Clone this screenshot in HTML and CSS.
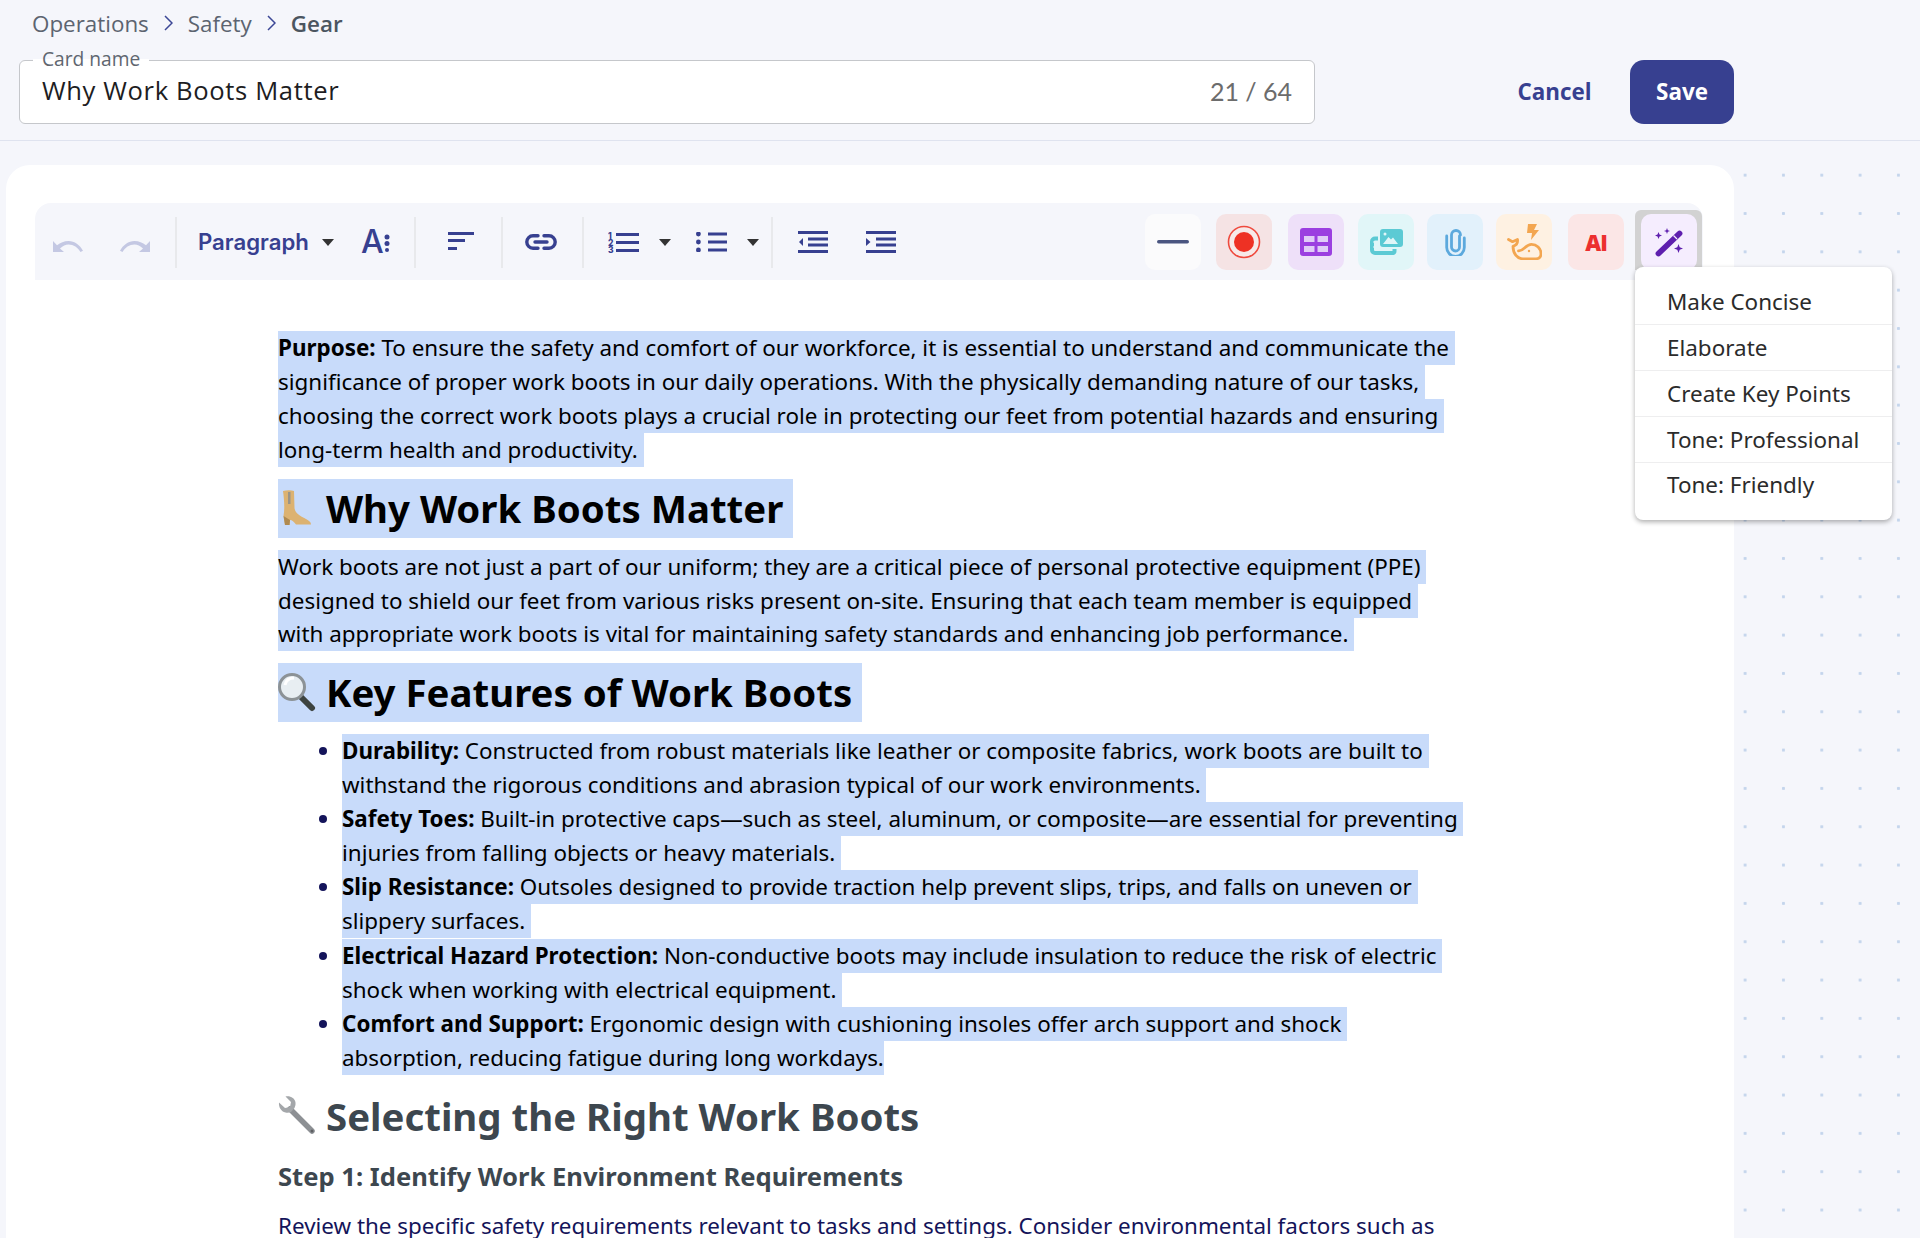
FILE: index.html
```html
<!DOCTYPE html>
<html lang="en">
<head>
<meta charset="utf-8">
<title>Why Work Boots Matter</title>
<link rel="stylesheet" href="styles.css">
</head>
<body>
<header class="topbar">
  <nav class="crumbs">
    <span>Operations</span>
    <svg class="chev" width="9" height="16" viewBox="0 0 9 16"><path d="M1 1l7 7-7 7"/></svg>
    <span>Safety</span>
    <svg class="chev" width="9" height="16" viewBox="0 0 9 16"><path d="M1 1l7 7-7 7"/></svg>
    <span class="crumb-current">Gear</span>
  </nav>
  <div class="name-row">
    <div class="name-field">
      <span class="name-label">Card name</span>
      <span class="name-value">Why Work Boots Matter</span>
      <span class="name-count">21 / 64</span>
    </div>
    <button class="btn-cancel">Cancel</button>
    <button class="btn-save">Save</button>
  </div>
</header>
<main class="canvas">
  <section class="card">
    <div class="toolbar">
      <span class="tool t-undo"><svg width="30" height="11" viewBox="0 0 30 11"><path class="fade" d="M0 0v11h11L7 7.400C10 4.800 12.500 3.500 15.500 3.500c5 0 9.500 3 12 7.500L30 9.800C27 4 21.500 0 15.500 0 11 0 7.500 1.700 4 4.300z"/></svg></span>
      <span class="tool t-redo"><svg width="30" height="11" viewBox="0 0 30 11"><path class="fade" transform="matrix(-1 0 0 1 30 0)" d="M0 0v11h11L7 7.400C10 4.800 12.500 3.500 15.500 3.500c5 0 9.500 3 12 7.500L30 9.800C27 4 21.500 0 15.500 0 11 0 7.500 1.700 4 4.300z"/></svg></span>
      <i class="sep s1"></i>
      <span class="para">Paragraph</span>
      <svg class="caret c1" width="12" height="7" viewBox="0 0 12 7"><path d="M0 0h12L6 7z"/></svg>
      <span class="fontsize"><span>A</span><svg width="6" height="18" viewBox="0 0 6 18"><circle cx="3" cy="3" r="2.500"/><circle cx="3" cy="9.500" r="2.500"/><circle cx="3" cy="16" r="2"/></svg></span>
      <i class="sep s2"></i>
      <svg class="ic i-align" width="26" height="18" viewBox="0 0 26 18"><path d="M0 0h26v3H0zM0 7h17v3H0zM0 15h9v3H0z"/></svg>
      <i class="sep s3"></i>
      <svg class="i-link" width="32" height="16" viewBox="0 0 32 16"><path d="M13 1.800H8a6.200 6.200 0 0 0 0 12.400h5M19 1.800h5a6.200 6.200 0 0 1 0 12.400h-5M10 8h12"/></svg>
      <i class="sep s4"></i>
      <svg class="ic i-ol" width="31" height="22" viewBox="0 0 31 22"><text x="0" y="7.500" class="num">1</text><text x="0" y="14.500" class="num">2</text><text x="0" y="22" class="num">3</text><path d="M8 2h23v3H8zM8 10h23v3H8zM8 18h23v3H8z"/></svg>
      <svg class="caret c2" width="12" height="7" viewBox="0 0 12 7"><path d="M0 0h12L6 7z"/></svg>
      <svg class="ic i-ul" width="31" height="20" viewBox="0 0 31 20"><circle cx="2.400" cy="2" r="2.400"/><circle cx="2.400" cy="10" r="2.400"/><circle cx="2.400" cy="18" r="2.400"/><path d="M12 .500h19v3H12zM12 8.500h19v3H12zM12 16.500h19v3H12z"/></svg>
      <svg class="caret c3" width="12" height="7" viewBox="0 0 12 7"><path d="M0 0h12L6 7z"/></svg>
      <i class="sep s5"></i>
      <svg class="ic i-out" width="30" height="22" viewBox="0 0 30 22"><path d="M0 0h30v3H0zM10 6.500h20v3H10zM10 12.500h20v3H10zM0 19h30v3H0zM5 7v8L1 11z"/></svg>
      <svg class="ic i-in" width="30" height="22" viewBox="0 0 30 22"><path d="M0 0h30v3H0zM10 6.500h20v3H10zM10 12.500h20v3H10zM0 19h30v3H0zM0 7v8l4.500-4z"/></svg>
      <div class="insert">
        <span class="pill p-line"><svg width="32" height="4" viewBox="0 0 32 4"><rect width="32" height="3.500" rx="1.700" fill="#4a5580"/></svg></span>
        <span class="pill p-rec"><svg width="34" height="34" viewBox="0 0 34 34"><circle cx="17" cy="17" r="15.500" fill="#f7e9e8" stroke="#ef4a3e" stroke-width="1.600"/><circle cx="17" cy="17" r="10" fill="#ee3124"/></svg></span>
        <span class="pill p-table"><svg width="32" height="28" viewBox="0 0 32 28"><rect width="32" height="28" rx="3" fill="#9b3fe0"/><path fill="#e0ccf7" d="M4 8h10.500v6H4zM17.500 8H28v6H17.500zM4 18h10.500v6H4zM17.500 18H28v6H17.500z"/></svg></span>
        <span class="pill p-img"><svg width="33" height="26" viewBox="0 0 33 26"><path fill="none" stroke="#5ccad4" stroke-width="4" d="M8 9.500H5a3 3 0 0 0-3 3V21a3 3 0 0 0 3 3h18a2 2 0 0 0 1.500-2v-2"/><path fill="#e1f6f8" d="M3.500 12h2.500v2H3.500zM3.500 17h2.500v2H3.500z"/><rect x="10" width="23" height="18" rx="3" fill="#5ccad4"/><path fill="#e1f6f8" d="M13 15l5.500-7 2.500 2.500 2-2 5 6.500z"/><circle cx="15" cy="5" r="1.500" fill="#e1f6f8"/></svg></span>
        <span class="pill p-clip"><svg width="21" height="27" viewBox="0 0 21 27"><path fill="none" stroke="#5ca9dd" stroke-width="2.800" stroke-linecap="round" d="M14.500 7v11a4 4 0 0 1-8 0V6a4.500 4.500 0 0 1 9 0M19.300 9v9.500a8.800 8.800 0 0 1-17.600 0V7"/></svg></span>
        <span class="pill p-whale"><svg width="35" height="36" viewBox="0 0 35 36"><path fill="#f3a650" d="M21 0h9l-3 6h5l-8 10 1-7h-5z"/><path fill="none" stroke="#f3a650" stroke-width="2.800" stroke-linejoin="round" stroke-linecap="round" d="M1.500 15.500l4 2.200 5-2.200c.5 4-1.500 6-4.500 6.800 0 7 4 12.500 10 12.500h13c3 0 5-2 5-5 0-5.500-4.500-9.500-9.500-9.500-6 0-7.500 7-13 6.500"/><circle cx="22" cy="27" r="1.200" fill="#f3a650"/></svg></span>
        <span class="pill p-ai">AI</span>
        <span class="wand-frame"><span class="pill p-wand"><svg width="29" height="29" viewBox="0 0 29 29"><path stroke="#5e1fae" stroke-width="5.800" stroke-linecap="round" d="M3.500 25.500L24.500 5.500"/><path stroke="#f5edfe" stroke-width="1.300" d="M18.500 7.500l3.500 3.500"/><path fill="#5e1fae" d="M3.500 4l1 2.500 2.500 1-2.500 1-1 2.500-1-2.500L0 7.500l2.500-1zM12 0l.8 2.200L15 3l-2.200.8L12 6l-.8-2.200L9 3l2.200-.8zM23.500 16l1.200 3.300 3.300 1.200-3.300 1.200-1.200 3.300-1.200-3.300-3.300-1.200 3.300-1.200z"/></svg></span></span>
      </div>
      <ul class="menu">
        <li>Make Concise</li>
        <li>Elaborate</li>
        <li>Create Key Points</li>
        <li>Tone: Professional</li>
        <li>Tone: Friendly</li>
      </ul>
    </div>
    <article class="doc" id="doc">
      <p id="first"><strong>Purpose:</strong> To ensure the safety and comfort of our workforce, it is essential to understand and communicate the significance of proper work boots in our daily operations. With the physically demanding nature of our tasks, choosing the correct work boots plays a crucial role in protecting our feet from potential hazards and ensuring long-term health and productivity.</p>
      <h2><svg class="emoji picked" width="38" height="59" viewBox="0 -9 38 59"><path fill="#dcb271" d="M5 3C9 2 13 2 16 3l.5 17c.5 5 5.500 8 11.500 11 3 1.500 5 3 5 5.500H18c-2-2.500-4-4.500-6-4.500l-.5 5H7L5.500 28C7 20 6 10 5 3z"/><path fill="#b08a50" d="M5.500 28l6.500 4-.5 5H7z"/><path fill="#9a9488" d="M10 4h2.500v12H10z"/></svg> Why Work Boots Matter</h2>
      <p class="tight">Work boots are not just a part of our uniform; they are a critical piece of personal protective equipment (PPE) designed to shield our feet from various risks present on-site. Ensuring that each team member is equipped with appropriate work boots is vital for maintaining safety standards and enhancing job performance.</p>
      <h2><svg class="emoji picked" width="38" height="59" viewBox="0 -9 38 59"><path stroke="#3d4340" stroke-width="6" stroke-linecap="round" d="M23 25l11 11"/><circle cx="14" cy="15" r="12.500" fill="#e8eef2" stroke="#8c9296" stroke-width="3"/><path d="M7 13c1-5 5-7 9-7" fill="none" stroke="#fff" stroke-width="3"/></svg> Key Features of Work Boots</h2>
      <ul>
        <li><strong>Durability:</strong> Constructed from robust materials like leather or composite fabrics, work boots are built to withstand the rigorous conditions and abrasion typical of our work environments.</li>
        <li><strong>Safety Toes:</strong> Built-in protective caps—such as steel, aluminum, or composite—are essential for preventing injuries from falling objects or heavy materials.</li>
        <li><strong>Slip Resistance:</strong> Outsoles designed to provide traction help prevent slips, trips, and falls on uneven or slippery surfaces.</li>
        <li><strong>Electrical Hazard Protection:</strong> Non-conductive boots may include insulation to reduce the risk of electric shock when working with electrical equipment.</li>
        <li><strong>Comfort and Support:</strong> Ergonomic design with cushioning insoles offer arch support and shock absorption, reducing fatigue during long workdays.</li>
      </ul>
      <h2><svg class="emoji" width="38" height="59" viewBox="0 -9 38 59"><path stroke="#8d9094" stroke-width="5.500" stroke-linecap="round" d="M12 13l22 22"/><path fill="#a4a7aa" d="M1 6.500L7 12l5-1 1-5-5.500-5.500C12 -.5 17 2 17.500 6.500c.3 2.500-.5 4-1 5.500L13 16c-1.500.7-3.500 1-5.500.5C3 15.500.5 11 1 6.500z"/><circle cx="34" cy="35" r="1.500" fill="#5d5f62"/></svg> Selecting the Right Work Boots</h2>
      <h3>Step 1: Identify Work Environment Requirements</h3>
      <p>Review the specific safety requirements relevant to tasks and settings. Consider environmental factors such as</p>
    </article>
  </section>
</main>
<script src="select.js"></script>
</body>
</html>
```
FILE: styles.css
```css
* { box-sizing: border-box; }
html, body { margin: 0; height: 1238px; overflow: hidden; }
body { background: #f5f6fb; font-family: "Noto Sans", sans-serif; display: flex; flex-direction: column; }

.topbar { height: 141px; border-bottom: 1px solid #dfe3ef; flex: none; }
.crumbs { height: 46px; padding-left: 32px; display: flex; align-items: center; gap: 15px; font: 400 22.4px "Open Sans", sans-serif; color: #5c6470; }
.crumb-current { font-weight: 600; color: #4b5560; }
.chev { fill: none; stroke: #3c4796; stroke-width: 1.500; }
.name-row { display: flex; align-items: center; padding-left: 19px; margin-top: 14px; }
.name-field { position: relative; width: 1296px; height: 64px; background: #fff; border: 1px solid #c5c7cb; border-radius: 6px; display: flex; align-items: center; justify-content: space-between; padding: 0 22px 3px; }
.name-label { position: absolute; left: 13px; top: -14px; padding: 0 9px; height: 24px; background: linear-gradient(#f5f6fb 50%, #fff 50%); font: 400 19.2px/24px "Open Sans", sans-serif; color: #5f6670; }
.name-value { font: 400 25.6px "Open Sans", sans-serif; letter-spacing: .63px; color: #1d1d22; }
.name-count { font: 400 25px "Lato", sans-serif; color: #6c6c6c; }
button { border: 0; background: none; font: 700 22.4px "Open Sans", sans-serif; padding: 0 0 2px; }
.btn-cancel { margin-left: 202px; color: #374090; width: 75px; }
.btn-save { margin-left: 38px; width: 104px; height: 64px; border-radius: 14px; background: #374090; color: #fff; }

.canvas { flex: 1; min-height: 0; overflow: hidden; padding: 24px 186px 0 6px; background-image: radial-gradient(circle at center, #c4d5ec 0, #c4d5ec 1.3px, transparent 1.8px); background-size: 38.33px 38.33px; background-position: 1.2px 15px; }
.card { height: 100%; background: #fff; border-radius: 24px 24px 0 0; padding: 38px 31px 0 29px; }

.toolbar { position: relative; height: 77px; background: #f5f6fb; border-radius: 16px 16px 0 0; display: flex; align-items: center; }
.toolbar svg { flex: none; display: block; }
.ic, .fontsize svg, .i-ol .num { fill: #374090; }
.fade { fill: #c4c8e3; }
.tool { display: flex; width: 30px; margin-top: 10px; }
.t-undo { margin-left: 18px; }
.t-redo { margin-left: 37px; }
.sep { flex: none; width: 2px; height: 51px; background: #e8e9ec; margin-top: 1px; }
.s1 { margin-left: 25px; }
.para { margin-left: 21px; width: 112px; font: 600 22.2px "Inter", sans-serif; color: #374090; white-space: nowrap; }
.caret { fill: #333; margin-top: 1px; }
.c1 { margin-left: 12px; }
.fontsize { margin-left: 27px; width: 27px; display: flex; align-items: center; justify-content: space-between; color: #374090; font: 500 32px/1 "Inter", sans-serif; }
.fontsize svg { margin-top: 3px; }
.s2 { margin-left: 26px; }
.i-align { margin: -2px 0 0 32px; }
.s3 { margin-left: 27px; }
.i-link { margin-left: 22px; fill: none; stroke: #374090; stroke-width: 3.400; stroke-linecap: round; }
.s4 { margin-left: 25px; }
.i-ol { margin-left: 24px; }
.i-ol .num { font: 800 8.500px "Inter", sans-serif; }
.c2 { margin-left: 20px; }
.i-ul { margin-left: 25px; }
.c3 { margin-left: 20px; }
.s5 { margin-left: 12px; }
.i-out { margin-left: 25px; }
.i-in { margin-left: 38px; }

.insert { margin-left: auto; margin-right: 1px; display: flex; align-items: flex-start; align-self: flex-start; padding-top: 11px; }
.pill { flex: none; width: 56px; height: 56px; border-radius: 10px; display: flex; align-items: center; justify-content: center; }
.p-line { background: #fbfbfc; }
.p-rec { background: #f5e3e4; margin-left: 15px; }
.p-table { background: #eee0f9; margin-left: 16px; }
.p-img { background: #e1f6f8; margin-left: 14px; }
.p-clip { background: #e2f1fb; margin-left: 13px; }
.p-whale { background: #fef1e2; margin-left: 13px; }
.p-ai { background: #fbe6e6; margin-left: 16px; color: #ec2f2f; font: 800 22px "Open Sans", sans-serif; letter-spacing: -1px; }
.wand-frame { margin: -4px 0 0 11px; padding: 4px 5px 0 6px; height: 60px; background: #d2d2d2; border-radius: 6px 6px 0 0; }
.p-wand { background: #f5edfe; }

.menu { position: absolute; left: 1600px; top: 64px; width: 257px; height: 253px; margin: 0; padding: 12px 0 11px; list-style: none; background: #fff; border-radius: 8px; box-shadow: 0 2px 5px rgba(0,0,0,.32); z-index: 2; }
.menu li { height: 46px; padding-left: 32px; font-size: 22.45px; line-height: 45px; color: #2b2b2b; border-bottom: 1px solid #eeeeef; }
.menu li:last-child { border-bottom: 0; line-height: 44px; }

.doc { width: 1427px; padding: 51px 0 0 243px; font-size: 22.42px; line-height: 34px; color: #14145a; }
.doc p { margin: 0 0 12px; }
.doc p.tight { line-height: 33.67px; }
.doc h2 { margin: 0 0 12px; font-size: 38.4px; line-height: 59px; font-weight: 700; color: #3d474f; }
.doc h3 { margin: 0 0 13px; font-size: 25.6px; line-height: 38px; font-weight: 700; color: #3d474f; }
.doc ul { margin: 0 0 12px; padding-left: 64px; line-height: 34.1px; }
.doc strong { font-weight: 700; }
.emoji { display: inline-block; vertical-align: top; }
.picked { background: #c8dbfa; }
.doc ::selection { background: #c8dbfa; color: #000; }
```
FILE: select.js
```js
// The reference shows part of the document as a live text selection.
var items = document.querySelectorAll('#doc ul li');
var lastText = items[items.length - 1].lastChild;
var range = document.createRange();
range.setStartBefore(document.getElementById('first').firstChild);
range.setEnd(lastText, lastText.length);
var selection = window.getSelection();
selection.removeAllRanges();
selection.addRange(range);
```
